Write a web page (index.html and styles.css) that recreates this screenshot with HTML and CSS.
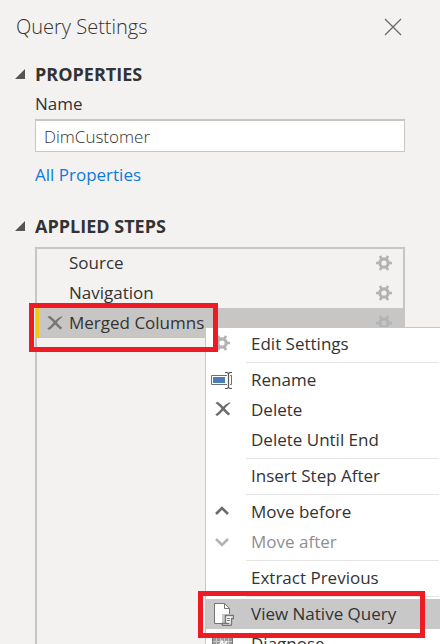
FILE: index.html
```html
<!DOCTYPE html>
<html lang="en">
<head>
<meta charset="utf-8">
<title>Query Settings</title>
<link rel="stylesheet" href="styles.css">
</head>
<body>
<svg class="defs" aria-hidden="true">
  <symbol id="gear" viewBox="0 0 16 16">
    <g stroke="currentColor" fill="none">
      <circle cx="8" cy="8" r="4.200" stroke-width="3.200"/>
      <path stroke-width="2.600" d="M0 8h4M12 8h4M4 0.800l1.800 3.600M12 0.800l-1.800 3.600M4 15.200l1.800-3.600M12 15.200l-1.800-3.600"/>
    </g>
  </symbol>
  <symbol id="cross" viewBox="0 0 16 16">
    <path fill="currentColor" d="M.4 2.200 2.400.8C4.700 2 6.400 3.700 8.300 5.700 10.300 3.800 12.500 2.200 15 1.300l.6.700C13.400 3.400 11.700 5.200 9.900 7.400c1.900 2.100 3.500 3.800 5.300 5.300l-1.800 1.900C11.600 13.200 10 11.400 8.200 9.400 6.300 11.500 4.300 13.500 1.900 15L.3 13.400C2.800 12 4.700 9.900 6.500 7.500 4.700 5.400 3 3.600.4 2.200z"/>
  </symbol>
</svg>
<main class="panel">
  <header class="panel-header">
    <h1>Query Settings</h1>
    <button class="close" type="button" aria-label="Close">
      <svg width="18" height="18" viewBox="0 0 18 18"><path d="M1 1l16 16M17 1L1 17" fill="none" stroke="#6b6967" stroke-width="1.3"/></svg>
    </button>
  </header>

  <section class="group">
    <h2><svg class="caret" viewBox="0 0 10 10"><path d="M10 0v10H0z"/></svg>PROPERTIES</h2>
    <label for="query-name">Name</label>
    <input id="query-name" type="text" value="DimCustomer">
    <a class="all-properties" href="#properties">All Properties</a>
  </section>

  <section class="group steps-group">
    <h2><svg class="caret" viewBox="0 0 10 10"><path d="M10 0v10H0z"/></svg>APPLIED STEPS</h2>
    <ul class="steps">
      <li class="step"><span>Source</span><svg class="gear"><use href="#gear"/></svg></li>
      <li class="step"><span>Navigation</span><svg class="gear"><use href="#gear"/></svg></li>
      <li class="step selected">
        <svg class="remove"><use href="#cross"/></svg>
        <span>Merged Columns</span><svg class="gear"><use href="#gear"/></svg>
        <div class="callout step-callout"></div>
        <div class="menu">
          <button type="button"><svg class="icon faded" viewBox="0 0 24 24"><use href="#gear" x="4" y="3" width="16" height="16"/></svg>Edit Settings</button>
          <hr>
          <button type="button"><svg class="icon" viewBox="0 0 24 24"><path d="M17 7.500H1.500v9H17M20 7.500h1.500v9H20" fill="none" stroke="#6f6f6f"/><path fill="#4a7ebb" d="M3 9h12v6H3z"/><path d="M15 4.500h2l1.500 1 1.500-1h2M18.500 5.500v14M15 20.500h2l1.500-1 1.500 1h2" fill="none" stroke="#555" stroke-width="1.200"/></svg>Rename</button>
          <button type="button"><svg class="icon" viewBox="0 0 24 24"><use href="#cross" x="5" y="3" width="16" height="16"/></svg>Delete</button>
          <button type="button"><span class="icon"></span>Delete Until End</button>
          <hr>
          <button type="button"><span class="icon"></span>Insert Step After</button>
          <hr>
          <button type="button"><svg class="icon" viewBox="0 0 24 24"><path d="M6 14l6-6 6 6" fill="none" stroke="currentColor" stroke-width="2.600"/></svg>Move before</button>
          <button type="button" disabled><svg class="icon faded" viewBox="0 0 24 24"><path d="M6 9l6 6 6-6" fill="none" stroke="currentColor" stroke-width="2.600"/></svg>Move after</button>
          <hr>
          <button type="button"><span class="icon"></span>Extract Previous</button>
          <hr>
          <button type="button" class="active"><svg class="icon" viewBox="0 0 24 24"><path d="M4.500 1.500h10l5 5v15h-15z" fill="#fff" stroke="#777"/><path d="M14.500 1.500v5h5" fill="none" stroke="#777"/><path d="M12 12h12v12H12z" fill="#c8c8c8"/><path d="M15.500 21v-7.500h8v3h-2V22q0 1.500-1.500 1.500h-6.500q-1.500 0-1.500-2h7.500" fill="#fff" stroke="#777" stroke-width="1.400"/><path d="M17 16.500h3M17 18.500h3" stroke="#777"/></svg>View Native Query<div class="callout menu-callout"></div></button>
          <button type="button"><svg class="icon" viewBox="0 0 24 24"><path d="M2.500 5.500h20v16h-20z" fill="#999" stroke="#777"/><path d="M3 9.500h19M3 12.500h19M6.500 6v15M10.500 6v15M14.500 6v15M18.500 6v15" stroke="#c8c8c8"/><path d="M9 14l3-5 2 5 3-5" fill="none" stroke="#fff" stroke-width="1.500"/></svg>Diagnose</button>
        </div>
      </li>
    </ul>
  </section>
</main>
</body>
</html>
```

FILE: styles.css
```css
* { box-sizing: border-box; }
body {
  margin: 0;
  height: 100vh;
  overflow: hidden;
  background: #f3f2f1;
  color: #333;
  font: 17px/30px "Open Sans", "Noto Sans", sans-serif;
}
.defs { position: absolute; width: 0; height: 0; }
svg { flex: none; display: block; }
button { font: inherit; color: inherit; border: 0; background: none; padding: 0; }
.panel {
  display: flex;
  flex-direction: column;
  height: 100%;
  padding: 12px 35px 0 15px;
}
.panel-header {
  display: flex;
  justify-content: space-between;
  align-items: center;
  height: 29px;
}
h1 { margin: 0; font-size: 20px; font-weight: 300; padding-left: 1px; }
.close { margin-right: 3px; }
.group { display: flex; flex-direction: column; padding-left: 20px; }
.group h2 {
  display: flex;
  align-items: center;
  gap: 10px;
  margin: 18px 0 0 -20px;
  font-size: 18px;
  font-weight: 700;
}
.caret { width: 10px; height: 10px; fill: #555; }
#query-name {
  width: 100%;
  height: 33px;
  padding: 0 8px;
  border: 1px solid #c8c6c4;
  border-top-width: 2px;
  border-radius: 0;
  background: #fff;
  color: #333;
  font: 300 17px "Open Sans", "Noto Sans", sans-serif;
}
.all-properties {
  align-self: flex-start;
  margin-top: 8px;
  color: #0f7ad8;
  text-decoration: none;
}
.steps-group { flex: 1; }
.steps-group h2 { margin-top: 21px; }
.steps {
  flex: 1;
  margin: 6px 0 0;
  padding: 0;
  list-style: none;
  border: 2px solid #c8c6c4;
  border-bottom: 0;
}
.step {
  position: relative;
  display: flex;
  align-items: center;
  height: 30px;
  margin: 0 -1px;
  padding: 0 12px 0 33px;
  white-space: nowrap;
}
.step:first-child { margin-top: -1px; }
.step .gear { width: 16px; height: 16px; margin-left: auto; color: #b3b3b3; }
.selected {
  padding-left: 11px;
  background: #c8c6c4;
  box-shadow: inset 3px 0 #f2c811;
}
.remove { width: 16px; height: 16px; margin-right: 6px; color: #767676; }
.menu {
  position: absolute;
  z-index: 1;
  top: 19px;
  left: 169px;
  right: -36px;
  padding-top: 1px;
  border: solid #c8c6c4;
  border-width: 1px 0 0 1px;
  background: #fff;
}
.menu button {
  position: relative;
  display: flex;
  align-items: center;
  width: 100%;
  height: 30px;
  padding-left: 4px;
  text-align: left;
  white-space: nowrap;
}
.menu button:disabled { color: #8f8f8f; }
.menu .icon { width: 24px; height: 24px; margin-right: 17px; color: #6b6b6b; }
.menu .faded { color: #b3b3b3; }
.menu .active { background: #c8c8c8; }
.menu hr {
  height: 6px;
  margin: 0 1px 0 40px;
  border: 0;
  background: linear-gradient(#e5e5e5, #e5e5e5) 0 3px / 100% 1px no-repeat;
}
.callout { position: absolute; z-index: 2; border: 5px solid #ed1c24; }
.step-callout { top: -5px; left: -7px; width: 189px; height: 49px; }
.menu-callout { top: -8px; left: -8px; width: 227px; height: 47px; }
```
